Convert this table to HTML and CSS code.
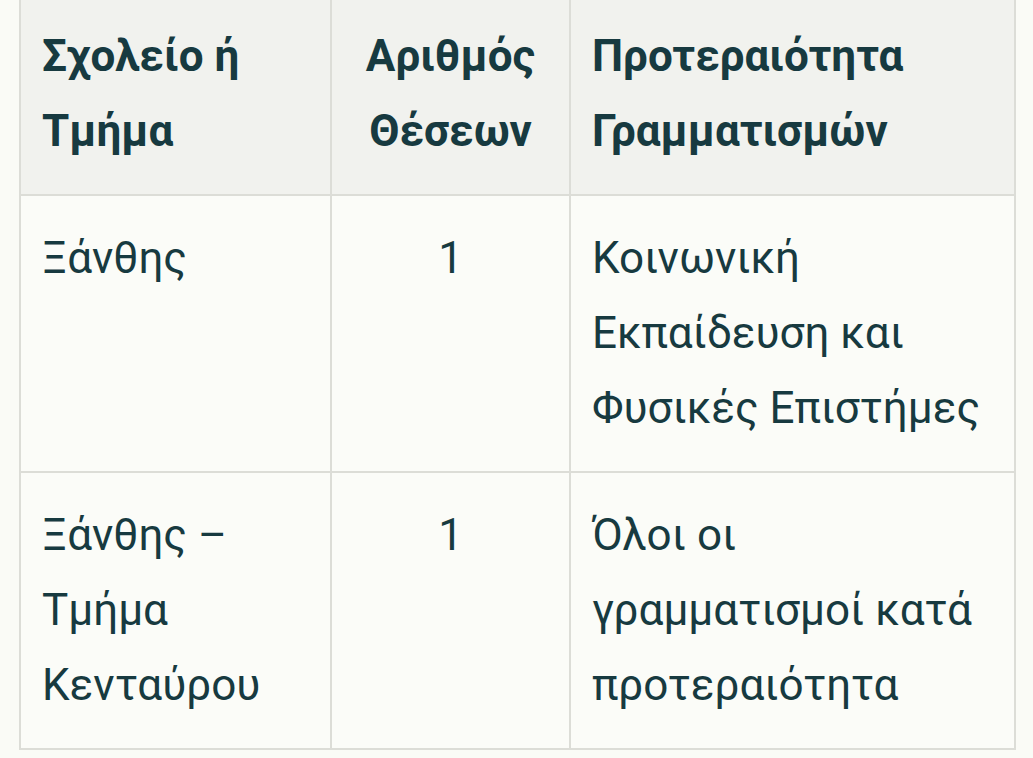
FILE: index.html
```html
<!DOCTYPE html>
<html lang="el">
<head>
<meta charset="utf-8">
<title>Θέσεις</title>
<link rel="stylesheet" href="styles.css">
</head>
<body>
<div class="wrap">
<table class="positions">
<colgroup>
<col class="c1">
<col class="c2">
<col class="c3">
</colgroup>
<thead>
<tr>
<th>Σχολείο ή Τμήμα</th>
<th class="num">Αριθμός Θέσεων</th>
<th>Προτεραιότητα Γραμματισμών</th>
</tr>
</thead>
<tbody>
<tr>
<td>Ξάνθης</td>
<td class="num">1</td>
<td>Κοινωνική Εκπαίδευση και Φυσικές Επιστήμες</td>
</tr>
<tr>
<td>Ξάνθης – Τμήμα Κενταύρου</td>
<td class="num">1</td>
<td>Όλοι οι γραμματισμοί κατά προτεραιότητα</td>
</tr>
</tbody>
</table>
</div>
</body>
</html>
```
FILE: styles.css
```css
html, body {
  margin: 0;
  padding: 0;
  background: #fafbf6;
}
body {
  font-family: Roboto, "Noto Sans", sans-serif;
  color: #173a40;
  overflow: hidden;
}
.wrap {
  padding: 0 19px;
  margin-top: -8px;
}
.positions {
  width: 995px;
  table-layout: fixed;
  border-collapse: collapse;
  font-size: 44px;
  line-height: 75px;
}
.c1 { width: 311px; }
.c2 { width: 239px; }
.c3 { width: 445px; }
.positions th,
.positions td {
  border: 2px solid #dcddd7;
  padding: 25px 12px 25px 21px;
  text-align: left;
  vertical-align: top;
}
.positions th {
  background: #f1f2ee;
  font-weight: 700;
}
.positions td {
  background: #fbfcf8;
  font-weight: 400;
}
.positions .num {
  text-align: center;
  padding-left: 12px;
  padding-right: 12px;
}
```
